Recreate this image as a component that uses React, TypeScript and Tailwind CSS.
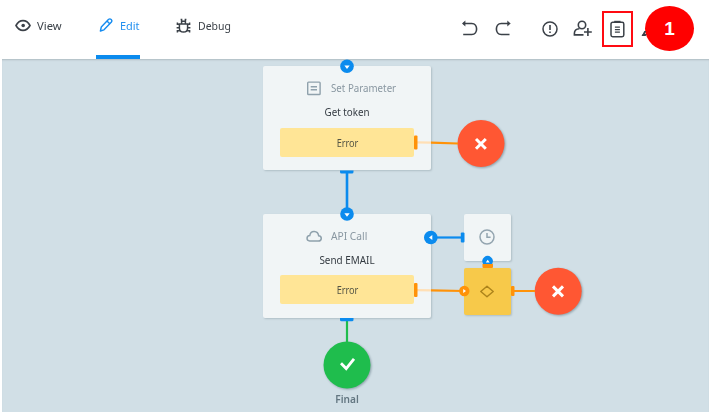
import type { ReactNode } from "react";

const ink = "#3b4148";

function Tab({ icon, label, textClass, className = "" }: { icon: ReactNode; label: string; textClass: string; className?: string }) {
  return (
    <button className={`flex h-[59px] shrink-0 items-center ${className}`}>
      {icon}
      <span className={`origin-left whitespace-nowrap text-left text-[11.5px] leading-4 ${textClass}`}>{label}</span>
    </button>
  );
}

function Header() {
  return (
    <header className="flex h-[59px] bg-white text-[#3b4148]">
      <Tab
        className="ml-[15px] w-[81px] pb-[7px]"
        label="View"
        textClass="ml-[6px] scale-x-[.98]"
        icon={
          <svg className="shrink-0" width="16" height="14" viewBox="0 0 16 14" fill="none" stroke={ink} strokeWidth="1.6">
            <path d="M1 6.5C4.5 0 11.5 0 15 6.5C11.5 13 4.5 13 1 6.5Z" />
            <circle cx="8.2" cy="6.5" r="1.8" fill={ink} stroke="none" />
          </svg>
        }
      />
      <Tab
        className="w-[44px] border-b-[4px] border-[#0b8bee] pb-[3px] pl-[3px] text-[#2290f0]"
        label="Edit"
        textClass="ml-[6px] scale-x-[.95]"
        icon={
          <svg className="-mt-[2px] shrink-0" width="15" height="16" viewBox="0 0 15 16" fill="none" stroke="#168cf0" strokeWidth="1.4" strokeLinejoin="round">
            <path d="M1.4 14L2.3 10L9.4 2.6C11.3.8 14 3.2 12.2 5.3L5 12.8L1.4 14ZM8 4.1L10.7 6.8" />
          </svg>
        }
      />
      <Tab
        className="ml-[36px] w-[60px] pb-[7px]"
        label="Debug"
        textClass="ml-[7px] scale-x-[.91]"
        icon={
          <svg className="-mt-px shrink-0" width="15" height="16" viewBox="0 0 15 16" fill="none" stroke={ink} strokeWidth="1.5">
            <path d="M4.6 1.4H5.6V5.2M10.4 1.4H9.4V5.2M5.6 3.2H9.4M3.4 6H11.6V10C11.6 12.4 10 14.1 7.5 14.1S3.4 12.4 3.4 10ZM1.4 4.6V6.2H3.4M13.6 4.6V6.2H11.6M.6 9.8H3.4M11.6 9.8H14.4M1.4 14.6V12.8H4M13.6 14.6V12.8H11" />
          </svg>
        }
      />
      <div className="ml-auto flex h-[57px] w-[250px] shrink-0 items-center">
        <svg className="shrink-0" width="17" height="17" viewBox="0 0 17 17" fill="none" stroke={ink} strokeWidth="1.6">
          <path d="M2 3.5H10.8C17.2 3.5 17.2 14.5 10.8 14.5H2.2" />
          <path d="M1 3.5L4.4.6V6.4Z" fill={ink} stroke="none" />
        </svg>
        <svg className="ml-[17px] shrink-0" width="16" height="17" viewBox="0 0 16 17" fill="none" stroke={ink} strokeWidth="1.6">
          <path d="M13 3.5H6.2C-.2 3.5-.2 14.5 6.2 14.5H14.5" />
          <path d="M15.7 3.5L12.3.6V6.4Z" fill={ink} stroke="none" />
        </svg>
        <svg className="ml-[31px] shrink-0" width="16" height="16" viewBox="0 0 16 16" fill="none" stroke={ink} strokeWidth="1.5">
          <circle cx="8" cy="8" r="7" />
          <path d="M8 4V9M8 10.5V12.1" strokeWidth="1.6" />
        </svg>
        <svg className="ml-[15px] shrink-0" width="20" height="17" viewBox="0 0 20 17" fill="none" stroke={ink} strokeWidth="1.6">
          <circle cx="9" cy="5" r="3.7" />
          <path d="M10.5 14.9H1.4V13.2C1.4 10.6 3.5 8.9 6.4 8.7M11 12H18.8M14.9 8.1V15.9" />
        </svg>
        <div className="ml-[9px] flex h-[36px] w-[31px] shrink-0 items-center justify-center border-[2px] border-[#ff0b12]">
          <svg width="15" height="18" viewBox="0 0 15 18" fill="none" stroke={ink} strokeWidth="1.5">
            <rect x="1" y="2.2" width="12.8" height="14.6" rx="1.7" />
            <path d="M4.9 7.2H9.9M4.9 9.7H9.9M4.9 12.2H9.9" strokeWidth="1.2" />
            <path d="M4.2 1.8H10.6" strokeWidth="2" />
          </svg>
        </div>
        <div className="relative ml-[12px] flex h-[45px] w-[49px] shrink-0 items-center justify-center rounded-[50%] bg-[#ff0000] font-['Liberation_Sans',sans-serif] text-[19px] font-bold leading-none text-white">
          1
          <span className="absolute -left-[2px] top-[25px] h-[5px] w-[4px] -skew-x-[28deg] border-b-2 border-l-2 border-[#3b4148]" />
        </div>
      </div>
    </header>
  );
}

function StepCard({ icon, kind, name, className, kindClass, nameClass, errorClass }: { icon: ReactNode; kind: string; name: string; className: string; kindClass: string; nameClass: string; errorClass: string }) {
  return (
    <article className={`absolute left-[261px] h-[104px] w-[168px] rounded-[2px] bg-[#f1f5f6] shadow-[1px_1px_2px_#aebec5] ${className}`}>
      <div className="mt-[14px] flex h-[16px] items-center pl-[43px]">
        {icon}
        <span className={`ml-[9px] origin-left whitespace-nowrap text-[11px] leading-4 text-[#8997a1] ${kindClass}`}>{kind}</span>
      </div>
      <div className={`mt-[8px] text-center text-[11px] leading-4 text-[#343b42] ${nameClass}`}>{name}</div>
      <div className={`ml-[17px] flex h-[29px] w-[134px] items-center justify-center rounded-[2px] bg-[#ffe596] text-[10.5px] leading-4 text-[#545545] ${errorClass}`}>
        <span className="scale-x-[.87]">Error</span>
      </div>
    </article>
  );
}

function Wires() {
  return (
    <svg className="absolute inset-0" width="707" height="353" viewBox="2 59 707 353" fill="none">
      <g stroke="#fff" strokeWidth="3">
        <circle cx="481" cy="143.5" r="23.5" fill="#ff5733" stroke="none" className="drop-shadow-[1px_1px_1px_#8da1aa]" />
        <path d="M476 139L485.8 148.8M485.8 139L476 148.8" />
        <circle cx="558.2" cy="291.2" r="23.5" fill="#ff5733" stroke="none" className="drop-shadow-[1px_1px_1px_#8da1aa]" />
        <path d="M553 286.4L563 296.4M563 286.4L553 296.4" />
        <circle cx="347" cy="365" r="23.5" fill="#1fbd4d" stroke="none" className="drop-shadow-[1px_1px_1px_#8da1aa]" />
        <path d="M341 363.3L346.2 368.6L354 358.8" strokeWidth="2.8" />
      </g>
      <g strokeWidth="2.2" stroke="#ff9208">
        <path d="M417 142.3L431 142.7M417 290.1L431 290.3" stroke="#ffdfb5" />
        <path d="M431 142.7L458 143.5M431 290.3L464 291M512 291H535" />
      </g>
      <g fill="#ff9208">
        <rect x="414" y="135.5" width="3.5" height="14" rx="1" />
        <rect x="414" y="283" width="3.5" height="14" rx="1" />
        <rect x="511" y="286" width="3.5" height="10" rx="1" />
        <rect x="482.5" y="263.5" width="10.5" height="4.5" rx="1" />
        <circle cx="464.3" cy="291" r="5.2" />
      </g>
      <path d="M463.2 289L466 291L463.2 293Z" fill="#fff" />
      <path d="M347 172V210" stroke="#0b8bee" strokeWidth="2.6" />
      <path d="M347 319V342" stroke="#1fbd4d" strokeWidth="2.2" />
      <path d="M436 237.5H462" stroke="#0b8bee" strokeWidth="2.2" />
      <g fill="#0b8bee">
        <circle cx="347" cy="66.3" r="6.8" />
        <circle cx="347" cy="214" r="6.8" />
        <circle cx="430.8" cy="237.5" r="6.8" />
        <path d="M483.2 264A5.2 5.2 0 1 1 492 264Z" />
        <path d="M340 170.5H353.5V172Q353.5 173.5 352 173.5H341.5Q340 173.5 340 172Z" />
        <path d="M340 318H353.5V319.7Q353.5 321.2 352 321.2H341.5Q340 321.2 340 319.7Z" />
        <rect x="460.8" y="232.5" width="3.7" height="10" rx="1" />
      </g>
      <g fill="#fff">
        <path d="M344.4 65.6H349.7L347 69Z" />
        <path d="M344.4 213.3H349.7L347 216.7Z" />
        <path d="M432.3 235V240L429 237.5Z" />
        <path d="M485.8 262.5H489.7L487.7 259.7Z" />
      </g>
    </svg>
  );
}

export default function App() {
  return (
    <div className="h-[412px] w-[711px] overflow-hidden bg-white font-['Noto_Sans',sans-serif]">
      <Header />
      <main className="relative ml-[2px] h-[353px] w-[707px] overflow-hidden bg-[#d1dfe6] shadow-[inset_0_2px_2px_-1px_#aebbc1]">
        <StepCard
          className="top-[7px]"
          kind="Set Parameter"
          name="Get token"
          kindClass="scale-x-[.885]"
          nameClass="scale-x-[.89]"
          errorClass="mt-[8px]"
          icon={
            <svg className="shrink-0" width="16" height="15" viewBox="0 0 16 15" fill="none" stroke="#8fa1ac" strokeWidth="1.4">
              <rect x="1.7" y="1.1" width="12.4" height="12.4" rx=".8" />
              <path d="M4.7 5.7H11M4.7 8.8H11" />
            </svg>
          }
        />
        <StepCard
          className="top-[155px]"
          kind="API Call"
          name="Send EMAIL"
          kindClass="scale-x-[.93]"
          nameClass="scale-x-[.9]"
          errorClass="mt-[7px]"
          icon={
            <svg className="shrink-0" width="16" height="15" viewBox="0 0 16 15" fill="none" stroke="#8fa1ac" strokeWidth="1.5">
              <path d="M3.7 12H12.4C16 12 16.3 7.3 12.7 6.8C12 1.2 4.5.8 3.8 6.5C.2 6.7.1 11.7 3.7 12Z" />
            </svg>
          }
        />
        <div className="absolute left-[462px] top-[155px] flex h-[47px] w-[47px] items-center justify-center rounded-[2px] bg-[#f1f5f6] shadow-[1px_1px_2px_#aebec5]">
          <svg className="-ml-[2px] -mt-[2px]" width="16" height="16" viewBox="0 0 16 16" fill="none" stroke="#94a5b0" strokeWidth="1.5">
            <circle cx="8" cy="8" r="7" />
            <path d="M8 4V8.3H11.6" />
          </svg>
        </div>
        <div className="absolute left-[462px] top-[209px] flex h-[47px] w-[47px] items-center justify-center rounded-[2px] bg-[#f7c94a] shadow-[1px_1px_2px_#aebec5]">
          <svg className="-ml-[1px] -mt-[1px]" width="16" height="13" viewBox="0 0 16 13" fill="none" stroke="#ad841b" strokeWidth="1.5" strokeLinejoin="round">
            <path d="M8 1.3L14.2 6.5L8 11.7L1.8 6.5Z" />
          </svg>
        </div>
        <Wires />
        <span className="absolute left-[315px] top-[332px] w-[60px] scale-x-[.92] text-center text-[11px] font-semibold leading-4 text-[#637681]">Final</span>
      </main>
    </div>
  );
}
